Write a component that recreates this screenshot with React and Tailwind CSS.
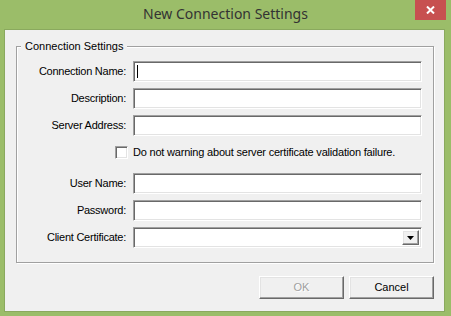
import React from 'react';

const sunken =
  'border border-t-[#a0a0a0] border-l-[#a0a0a0] border-b-white border-r-white shadow-[inset_1px_1px_0_#696969,inset_-1px_-1px_0_#e3e3e3] bg-white';
const raised =
  'border border-t-white border-l-white border-b-[#696969] border-r-[#696969] shadow-[inset_-1px_-1px_0_#a0a0a0,inset_1px_1px_0_#e3e3e3] bg-[#f0f0f0]';

const Field = ({ label, caret, combo }) => (
  <div className="flex items-center gap-[7px] h-[21px]">
    <span className="w-[109px] text-right tracking-[-0.25px]">{label}</span>
    <div className={`w-[289px] h-[21px] flex items-stretch justify-end p-[2px] ${sunken}`}>
      {caret && <span className="mr-auto ml-[1px] my-[1px] w-px bg-black"></span>}
      {combo && (
        <div className={`w-[17px] flex items-center justify-center ${raised}`}>
          <svg width="7" height="4" viewBox="0 0 7 4">
            <path d="M0 0H7L3.5 4Z" fill="#000" />
          </svg>
        </div>
      )}
    </div>
  </div>
);

const Button = ({ children, disabled }) => (
  <button
    className={`w-[85px] h-[23px] flex items-center justify-center ${raised} ${
      disabled ? 'text-[#a0a0a0] [text-shadow:1px_1px_0_#fff]' : 'text-black'
    }`}
  >
    {children}
  </button>
);

export default function App() {
  return (
    <div
      className="w-[451px] h-[316px] bg-[#9bbd69] flex flex-col text-[11px] text-black"
      style={{ fontFamily: '"Liberation Sans", Arial, sans-serif' }}
    >
      {/* Title bar */}
      <div className="relative h-[29px] flex items-center justify-center pb-[1px]">
        <span
          className="text-[14px] text-[#333] leading-none"
          style={{ fontFamily: '"Noto Sans", sans-serif' }}
        >
          New Connection Settings
        </span>
        <div className="absolute top-0 right-[5px] w-[31px] h-[20px] bg-[#c75050] flex items-center justify-center">
          <svg width="9" height="8" viewBox="0 0 9 8">
            <path d="M1 0.5L8 7.5M8 0.5L1 7.5" stroke="#fff" strokeWidth="2" />
          </svg>
        </div>
      </div>

      {/* Client area */}
      <div className="ml-[4px] w-[441px] h-[283px] bg-[#f0f0f0] border border-[#8aa95e] flex flex-col">
        <div className="ml-[11px] mt-[16px] w-[418px] h-[217px] border border-[#a0a0a0] shadow-[1px_1px_0_#fff,inset_1px_1px_0_#fff] flex flex-col">
          <div className="-mt-[7px] ml-[4px] px-[4px] w-fit h-[13px] leading-[13px] bg-[#f0f0f0]">
            Connection Settings
          </div>

          <div className="mt-[8px] flex flex-col gap-[6px]">
            <Field label="Connection Name:" caret />
            <Field label="Description:" />
            <Field label="Server Address:" />
          </div>

          <div className="mt-[10px] ml-[98px] flex items-center gap-[5px] h-[13px]">
            <div className={`w-[13px] h-[13px] ${sunken}`}></div>
            <span className="tracking-[-0.2px]">
              Do not warning about server certificate validation failure.
            </span>
          </div>

          <div className="mt-[14px] flex flex-col gap-[6px]">
            <Field label="User Name:" />
            <Field label="Password:" />
            <Field label="Client Certificate:" combo />
          </div>
        </div>

        <div className="mt-[13px] pr-[10px] flex justify-end gap-[5px]">
          <Button disabled>OK</Button>
          <Button>Cancel</Button>
        </div>
      </div>
    </div>
  );
}
